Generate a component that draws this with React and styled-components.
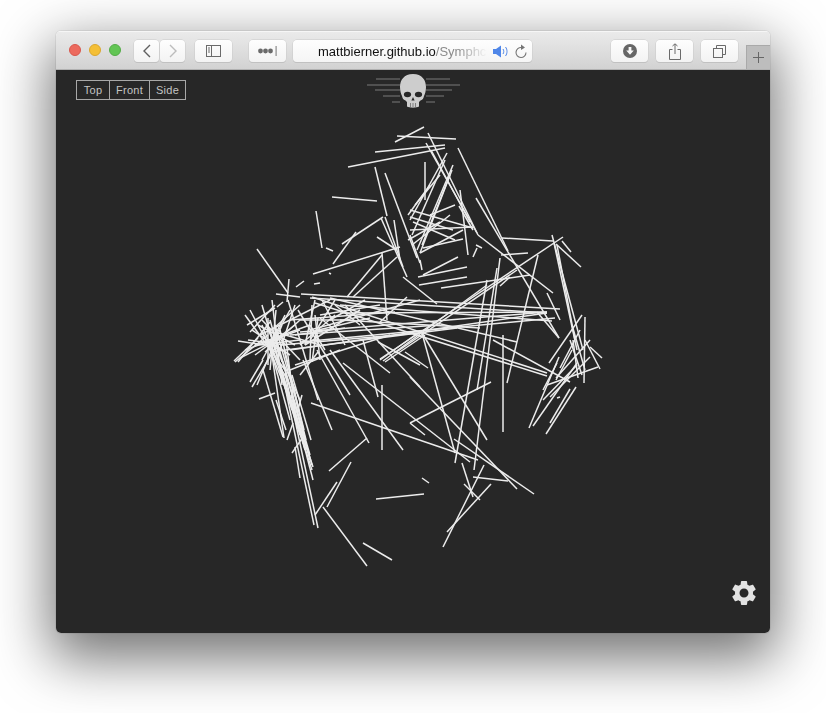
import React from "react";
import styled, { createGlobalStyle } from "styled-components";

// page coordinates of the wire segments [x1, y1, x2, y2]
const wires = [
  // top bits
  [395, 142, 424, 127], [397, 136, 456, 139], [375, 152, 445, 145], [348, 167, 445, 148],
  [375, 167, 387, 216], [385, 173, 417, 258], [332, 197, 377, 201], [316, 211, 322, 248],
  [326, 248, 333, 251], [342, 244, 383, 217], [356, 232, 333, 264], [313, 274, 400, 247],
  [329, 273, 331, 274], [296, 287, 304, 281], [314, 284, 320, 283], [257, 249, 288, 293],
  [289, 279, 287, 302], [276, 294, 300, 297], [277, 307, 283, 302], [382, 253, 387, 320],
  [382, 255, 347, 297], [397, 257, 353, 297], [377, 237, 397, 250], [381, 218, 407, 277],
  [385, 217, 403, 267], [394, 220, 400, 260], [403, 277, 437, 304], [407, 297, 380, 322],
  // upper knot
  [458, 148, 508, 251], [476, 198, 559, 338], [428, 133, 478, 235], [426, 143, 477, 233],
  [431, 150, 470, 222], [425, 162, 425, 200], [447, 153, 410, 220], [453, 165, 417, 250],
  [452, 170, 420, 253], [445, 160, 412, 235], [450, 175, 422, 245], [460, 190, 468, 255],
  [459, 206, 473, 230], [410, 210, 473, 228], [410, 230, 473, 227], [410, 217, 453, 230],
  [420, 253, 463, 230], [423, 248, 463, 239], [410, 235, 420, 263], [420, 260, 422, 270],
  [478, 235, 553, 293], [476, 245, 482, 248], [477, 248, 473, 257], [458, 257, 423, 275],
  [467, 267, 418, 277], [467, 277, 419, 285], [441, 288, 530, 275], [502, 238, 553, 241],
  [501, 255, 528, 253], [413, 222, 455, 240], [408, 240, 440, 222], [415, 205, 440, 175],
  [408, 215, 430, 185], [430, 215, 455, 205], [412, 245, 450, 215],
  // right side
  [563, 237, 380, 359], [552, 235, 583, 350], [554, 243, 577, 350], [557, 245, 575, 340],
  [562, 241, 571, 252], [556, 244, 581, 267], [538, 255, 507, 383], [500, 258, 474, 470],
  [497, 268, 477, 390], [487, 280, 455, 463], [547, 293, 560, 320], [500, 286, 510, 277],
  [585, 317, 584, 383], [582, 315, 549, 363], [537, 312, 559, 338], [573, 340, 578, 378],
  [572, 325, 585, 370], [590, 347, 602, 358], [585, 340, 600, 369], [529, 428, 559, 357],
  [533, 426, 577, 363], [546, 434, 576, 387], [550, 423, 570, 389], [557, 398, 560, 397],
  [543, 390, 557, 363], [543, 400, 577, 365], [550, 397, 590, 357], [547, 385, 598, 367],
  [556, 378, 590, 340], [560, 368, 580, 330], [556, 380, 572, 350], [570, 340, 582, 375],
  // horizontal bundle
  [301, 294, 560, 309], [310, 298, 547, 313], [340, 305, 552, 321], [340, 313, 547, 312],
  [300, 332, 547, 312], [340, 320, 480, 328], [290, 350, 547, 313], [270, 352, 457, 328],
  [290, 335, 440, 325], [330, 298, 517, 342], [395, 353, 517, 270], [383, 361, 487, 285],
  [312, 297, 547, 373], [315, 303, 547, 376], [300, 342, 555, 318], [280, 345, 420, 333],
  [290, 320, 395, 312], [310, 330, 420, 300],
  // centre fan
  [422, 333, 455, 453], [422, 333, 487, 440], [405, 352, 428, 368], [410, 377, 517, 489],
  [503, 335, 503, 432], [493, 340, 570, 382], [491, 382, 410, 423], [410, 423, 425, 435],
  [311, 403, 478, 460], [454, 439, 534, 494], [462, 463, 473, 497], [484, 465, 443, 547],
  [473, 477, 508, 481], [464, 484, 480, 500], [491, 484, 447, 532], [422, 478, 429, 483],
  [376, 499, 424, 494], [382, 385, 382, 450], [303, 360, 332, 430], [317, 350, 369, 443],
  [330, 350, 403, 450], [343, 363, 470, 462], [363, 340, 378, 397], [367, 438, 329, 471],
  [351, 462, 327, 507], [337, 482, 315, 515], [323, 507, 367, 566], [363, 543, 392, 560],
  [390, 373, 320, 318], [420, 387, 345, 305], [380, 360, 415, 335], [385, 362, 425, 335],
  [378, 342, 420, 365], [288, 300, 318, 400], [298, 310, 350, 395],
  // left tail
  [280, 363, 314, 525], [285, 373, 318, 528], [290, 397, 313, 467], [295, 447, 300, 478],
  [259, 399, 275, 393], [263, 370, 283, 437], [282, 360, 312, 465], [278, 345, 310, 455],
  [274, 345, 306, 450], [270, 340, 300, 435], [284, 350, 304, 430], [292, 375, 311, 440],
  [286, 340, 296, 420], [272, 355, 284, 438], [276, 400, 286, 430], [302, 395, 297, 413],
  [287, 440, 293, 423], [292, 453, 303, 437], [266, 325, 300, 400], [262, 330, 288, 395],
  [270, 330, 292, 410], [275, 325, 296, 400], [280, 330, 300, 415], [268, 340, 290, 420],
  [288, 395, 312, 470], [291, 395, 313, 480], [294, 400, 310, 460], [285, 385, 305, 450],
  [296, 400, 306, 440],
  // left cluster
  [238, 341, 265, 345], [235, 362, 268, 335], [247, 325, 275, 308], [250, 332, 275, 305],
  [252, 387, 278, 343], [250, 382, 263, 360], [257, 385, 282, 325], [234, 361, 258, 338],
  [238, 362, 270, 322], [245, 315, 285, 370], [250, 310, 290, 385], [262, 305, 290, 400],
  [272, 300, 282, 385], [276, 310, 270, 370], [285, 315, 270, 345], [290, 310, 262, 360],
  [255, 345, 310, 325], [260, 335, 330, 300], [245, 350, 300, 330], [262, 320, 300, 360],
  [268, 318, 268, 365], [258, 325, 295, 345], [274, 328, 300, 305], [295, 305, 280, 350],
  [275, 332, 320, 345], [290, 370, 340, 350], [295, 365, 390, 335], [312, 305, 310, 360],
  [315, 300, 305, 345], [310, 340, 335, 300], [300, 375, 318, 352], [315, 315, 320, 360],
  [322, 300, 345, 345], [300, 320, 345, 320], [305, 345, 360, 310], [318, 330, 370, 318],
  [252, 330, 290, 355], [255, 355, 295, 325], [262, 325, 278, 365], [258, 345, 300, 340],
  [265, 352, 300, 320], [270, 320, 282, 362], [248, 340, 285, 345], [240, 358, 280, 338],
  [300, 345, 335, 315], [310, 325, 325, 350], [295, 335, 345, 328], [318, 318, 312, 362],
  [330, 320, 365, 300], [335, 305, 360, 325], [320, 315, 380, 305],
];

const wings = [
  { y: 6, left: 24, right: 24 },
  { y: 12, left: 33, right: 34 },
  { y: 17, left: 25, right: 26 },
  { y: 23, left: 17, right: 18 },
  { y: 29, left: 8, right: 9 },
];

const GlobalStyle = createGlobalStyle`
  html, body {
    margin: 0;
    background: #fff;
  }
  body {
    width: 826px;
    height: 713px;
    overflow: hidden;
    font-family: "Liberation Sans", Arial, sans-serif;
  }
`;

const Page = styled.div`
  padding: 31px 0 0 56px;
`;

const Window = styled.div`
  width: 714px;
  height: 602px;
  display: flex;
  flex-direction: column;
  border-radius: 5px;
  overflow: hidden;
  box-shadow: 0 20px 55px 6px rgba(0, 0, 0, 0.55), 0 0 0 1px rgba(0, 0, 0, 0.06);
`;

const Toolbar = styled.div`
  height: 39px;
  flex: none;
  display: flex;
  align-items: flex-start;
  padding: 9px 0 0 13px;
  box-sizing: border-box;
  background: linear-gradient(#ebebeb, #d2d2d2);
  border-bottom: 1px solid #b1b1b1;
  box-shadow: inset 0 1px 0 #f6f6f6;
`;

const Lights = styled.div`
  display: flex;
  gap: 8px;
  margin-top: 4px;
  margin-right: 13px;
`;

const Light = styled.span`
  width: 12px;
  height: 12px;
  border-radius: 50%;
  box-sizing: border-box;
  background: ${(p) => p.$color};
  border: 1px solid ${(p) => p.$edge};
`;

const ToolButton = styled.button`
  width: ${(p) => p.$w}px;
  height: 22px;
  flex: none;
  padding: 0;
  margin: 0 0 0 ${(p) => p.$gap || 0}px;
  display: flex;
  align-items: center;
  justify-content: center;
  border: none;
  border-radius: 4px;
  background: linear-gradient(#fefefe, #f3f3f3);
  box-shadow: 0 0 0 0.5px #c9c9c9, 0 1px 0 #b9b9b9;
  color: #6a6a6a;
`;

const Address = styled.div`
  width: 239px;
  height: 22px;
  margin-left: 7px;
  flex: none;
  display: flex;
  align-items: center;
  box-sizing: border-box;
  padding: 0 5px 0 25px;
  border-radius: 4px;
  background: linear-gradient(#fefefe, #f5f5f5);
  box-shadow: 0 0 0 0.5px #c9c9c9, 0 1px 0 #b9b9b9;
`;

const Url = styled.div`
  width: 169px;
  flex: none;
  white-space: nowrap;
  font-size: 13px;
  color: #111;
  -webkit-mask-image: linear-gradient(90deg, #000 82%, transparent 100%);
  mask-image: linear-gradient(90deg, #000 82%, transparent 100%);
`;

const UrlPath = styled.span`
  color: #8a8a8a;
`;

const Speaker = styled.svg`
  margin-left: 6px;
  flex: none;
`;

const Reload = styled.svg`
  margin-left: 6px;
  flex: none;
`;

const RightTools = styled.div`
  margin-left: auto;
  display: flex;
`;

const NewTab = styled.div`
  width: 24px;
  height: 24px;
  margin: 5px 0 0 8px;
  flex: none;
  box-sizing: border-box;
  display: flex;
  align-items: center;
  justify-content: center;
  background: #bdbdbd;
  border-left: 1px solid #a9a9a9;
  border-top: 1px solid #a9a9a9;
`;

const Canvas = styled.div`
  position: relative;
  flex: 1;
  min-height: 0;
  background: #272727;
`;

const Wires = styled.svg`
  display: block;
  width: 100%;
  height: 100%;
`;

const Views = styled.div`
  position: absolute;
  left: 20px;
  top: 10px;
  display: flex;
  height: 20px;
  box-sizing: border-box;
  border: 1px solid #a8a8a8;
`;

const ViewButton = styled.div`
  width: ${(p) => p.$w}px;
  box-sizing: border-box;
  display: flex;
  align-items: center;
  justify-content: center;
  font-size: 11px;
  letter-spacing: 0.3px;
  color: #c4c4c4;
  & + & {
    border-left: 1px solid #a8a8a8;
  }
`;

const Emblem = styled.svg`
  position: absolute;
  left: 50%;
  top: 3px;
  margin-left: -47px;
`;

const Gear = styled.svg`
  position: absolute;
  right: 11px;
  bottom: 25px;
`;

const Skull = () => (
  <Emblem width="94" height="36" viewBox="0 0 94 36">
    {wings.map((w) => (
      <g key={w.y} stroke="#5f5f5f" strokeWidth="1.5">
        <line x1={34 - w.left} y1={w.y} x2={34} y2={w.y} />
        <line x1={60} y1={w.y} x2={60 + w.right} y2={w.y} />
      </g>
    ))}
    <path
      fill="#cdcdcd"
      d="M47 1C38 1 34 7 34 14C34 18 35 21 36 23C36.5 25 37 26.5 39.5 27.5L41 29V33.5C43 35 51 35 53 33.5V29L54.5 27.5C57 26.5 57.5 25 58 23C59 21 60 18 60 14C60 7 56 1 47 1Z"
    />
    <ellipse cx="41.5" cy="21.5" rx="3.6" ry="2.8" fill="#272727" />
    <ellipse cx="52.5" cy="21.5" rx="3.6" ry="2.8" fill="#272727" />
    <path fill="#272727" d="M47 24L45.4 27.5H48.6Z" />
    <path stroke="#5f5f5f" strokeWidth="0.7" d="M44.5 30V34M47 30V34.5M49.5 30V34" />
  </Emblem>
);

const App = () => {
  return (
    <Page>
      <GlobalStyle />
      <Window>
        <Toolbar>
          <Lights>
            <Light $color="#ec6a5e" $edge="#d9574c" />
            <Light $color="#f4bf36" $edge="#dba72c" />
            <Light $color="#62c554" $edge="#53ac46" />
          </Lights>
          <ToolButton $w={25}>
            <svg width="10" height="14" viewBox="0 0 10 14" fill="none" stroke="#5f5f5f" strokeWidth="1.4">
              <path d="M8 1L2 7L8 13" />
            </svg>
          </ToolButton>
          <ToolButton $w={25} $gap={1}>
            <svg width="10" height="14" viewBox="0 0 10 14" fill="none" stroke="#bcbcbc" strokeWidth="1.4">
              <path d="M2 1L8 7L2 13" />
            </svg>
          </ToolButton>
          <ToolButton $w={37} $gap={10}>
            <svg width="15" height="12" viewBox="0 0 15 12" fill="none" stroke="#6a6a6a">
              <rect x="0.5" y="0.5" width="14" height="11" />
              <path d="M5.5 0.5V11.5" />
              <path d="M2 3H4M2 5H4M2 7H4" />
            </svg>
          </ToolButton>
          <ToolButton $w={37} $gap={17}>
            <svg width="20" height="10" viewBox="0 0 20 10" fill="#6a6a6a">
              <circle cx="2.5" cy="5" r="2.4" />
              <circle cx="7.5" cy="5" r="2.4" />
              <circle cx="12.5" cy="5" r="2.4" />
              <rect x="17.5" y="0" width="1.2" height="10" fill="#8a8a8a" />
            </svg>
          </ToolButton>
          <Address>
            <Url>
              mattbierner.github.io<UrlPath>/Symphc</UrlPath>
            </Url>
            <Speaker width="16" height="13" viewBox="0 0 16 13">
              <path fill="#4f86e8" d="M0 4H3L8 0.5V12.5L3 9H0Z" />
              <path fill="none" stroke="#4f86e8" strokeWidth="1" d="M10 4C11 5.5 11 7.5 10 9M12.5 2C14.5 4.5 14.5 8.5 12.5 11" />
            </Speaker>
            <Reload width="12" height="15" viewBox="0 0 12 15" fill="none" stroke="#757575" strokeWidth="1.1">
              <path d="M6.5 3.5A5 5 0 1 0 11 8.5" />
              <path fill="#757575" stroke="none" d="M6 0.5L10 3.5L6 6Z" />
            </Reload>
          </Address>
          <RightTools>
            <ToolButton $w={37}>
              <svg width="14" height="14" viewBox="0 0 14 14">
                <circle cx="7" cy="7" r="7" fill="#666" />
                <path fill="#f8f8f8" d="M5.6 3H8.4V6.5H10.8L7 10.8L3.2 6.5H5.6Z" />
              </svg>
            </ToolButton>
            <ToolButton $w={37} $gap={8}>
              <svg width="12" height="17" viewBox="0 0 12 17" fill="none" stroke="#6a6a6a">
                <path d="M3.5 6.5H0.5V16.5H11.5V6.5H8.5" />
                <path d="M6 11V1M3.5 3L6 0.8L8.5 3" />
              </svg>
            </ToolButton>
            <ToolButton $w={37} $gap={8}>
              <svg width="13" height="13" viewBox="0 0 13 13" fill="none" stroke="#6a6a6a">
                <rect x="0.5" y="3.5" width="9" height="9" />
                <path d="M3.5 3.5V0.5H12.5V9.5H9.5" />
              </svg>
            </ToolButton>
          </RightTools>
          <NewTab>
            <svg width="11" height="11" viewBox="0 0 11 11" stroke="#666">
              <path d="M5.5 0V11M0 5.5H11" />
            </svg>
          </NewTab>
        </Toolbar>
        <Canvas>
          <Wires viewBox="56 70 714 563" preserveAspectRatio="none">
            <g stroke="#ececec" strokeWidth="1.5" strokeLinecap="butt">
              {wires.map((w, i) => (
                <line key={i} x1={w[0]} y1={w[1]} x2={w[2]} y2={w[3]} />
              ))}
            </g>
          </Wires>
          <Views>
            <ViewButton $w={32}>Top</ViewButton>
            <ViewButton $w={40}>Front</ViewButton>
            <ViewButton $w={36}>Side</ViewButton>
          </Views>
          <Skull />
          <Gear width="30" height="30" viewBox="0 0 24 24" fill="#e2e2e2">
            <path d="M19.14 12.94c.04-.3.06-.61.06-.94 0-.32-.02-.64-.07-.94l2.03-1.58c.18-.14.23-.41.12-.61l-1.92-3.32c-.12-.22-.37-.29-.59-.22l-2.39.96c-.5-.38-1.03-.7-1.62-.94l-.36-2.54c-.04-.24-.24-.41-.48-.41h-3.84c-.24 0-.43.17-.47.41l-.36 2.54c-.59.24-1.13.57-1.62.94l-2.39-.96c-.22-.08-.47 0-.59.22L2.74 8.87c-.12.21-.08.47.12.61l2.03 1.58c-.05.3-.09.63-.09.94s.02.64.07.94l-2.03 1.58c-.18.14-.23.41-.12.61l1.92 3.32c.12.22.37.29.59.22l2.39-.96c.5.38 1.03.7 1.62.94l.36 2.54c.05.24.24.41.48.41h3.84c.24 0 .44-.17.47-.41l.36-2.54c.59-.24 1.13-.56 1.62-.94l2.39.96c.22.08.47 0 .59-.22l1.92-3.32c.12-.22.07-.47-.12-.61l-2.01-1.58zM12 15.6c-1.98 0-3.6-1.62-3.6-3.6s1.62-3.6 3.6-3.6 3.6 1.62 3.6 3.6-1.62 3.6-3.6 3.6z" />
          </Gear>
        </Canvas>
      </Window>
    </Page>
  );
};

export default App;
